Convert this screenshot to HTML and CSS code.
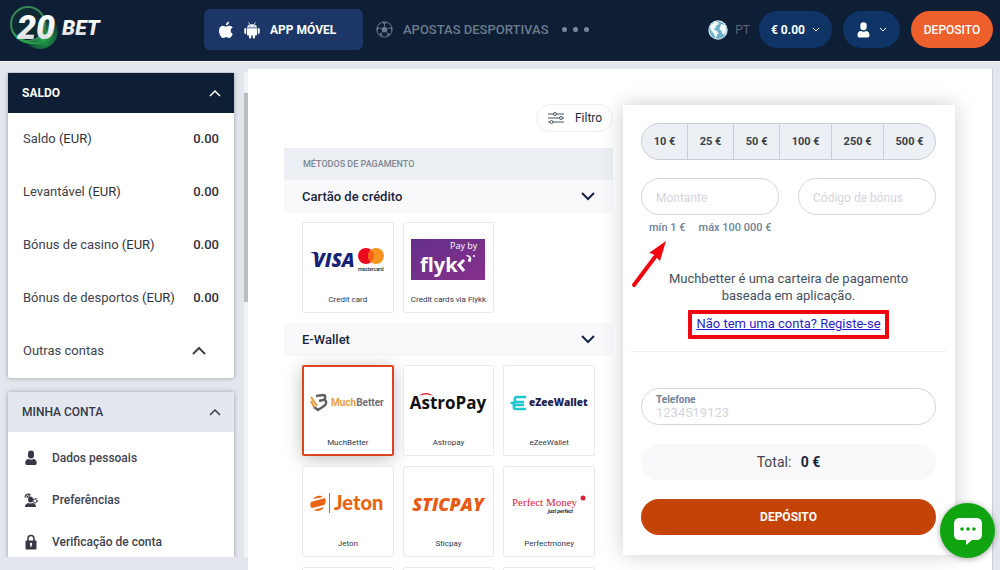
FILE: index.html
```html
<!DOCTYPE html>
<html lang="pt">
<head>
    <meta charset="UTF-8">
    <meta name="viewport" content="width=device-width, initial-scale=1.0">
    <title>20Bet - Depósito</title>
    <link rel="stylesheet" href="styles.css">
</head>
<body>
    <header class="header">
        <a class="logo" href="#" aria-label="20Bet">
            <svg width="94" height="48" viewBox="0 0 94 48">
                <defs>
                    <radialGradient id="glow" cx="0.6" cy="0.7" r="0.6">
                        <stop offset="0" stop-color="#22b24a"/>
                        <stop offset="1" stop-color="#0d1e35"/>
                    </radialGradient>
                    <linearGradient id="silver" x1="0" y1="0" x2="0" y2="1">
                        <stop offset="0.3" stop-color="#fff"/>
                        <stop offset="1" stop-color="#cfd3d6"/>
                    </linearGradient>
                </defs>
                <circle cx="32" cy="26" r="18" fill="url(#glow)"/>
                <circle cx="20" cy="19" r="17" fill="#0d2a33" stroke="#3a8553" stroke-width="2"/>
                <path d="M3 25c4 12 20 18 33 12-8 1-22 1-33-12z" fill="#27a04c"/>
                <text class="logo-num" x="9" y="34" fill="url(#silver)">20</text>
                <text class="logo-bet" x="54" y="30" fill="url(#silver)">BET</text>
            </svg>
        </a>
        <nav class="nav">
            <button class="app-button" type="button">
                <svg width="16" height="18" viewBox="0 0 16 18" fill="#fff">
                    <path d="M11 4.8c-1.300 0-2 .8-2.900.8S6.200 4.800 5 4.800C3 4.800 1 6.600 1 9.700 1 13.300 3.400 17 5.300 17c1 0 1.600-.7 2.900-.7 1.200 0 1.700.7 2.800.7 1.800 0 3.300-2.900 3.700-4.100-2.600-1.200-2.700-5 .100-6.300-.9-1.200-2.300-1.800-3.800-1.800z"/>
                    <path d="M7.900 4.500C7.800 2.500 9.300.8 11 .6c.2 2-1.300 3.900-3.100 3.900z"/>
                </svg>
                <svg width="16" height="18" viewBox="0 0 16 18" fill="#fff">
                    <path d="M3 6.500C3 2 13 2 13 6.500zM3 7.300h10v6.200c0 .6-.4 1-1 1H4c-.6 0-1-.4-1-1z"/>
                    <rect x="0.300" y="7" width="2" height="6" rx="1"/>
                    <rect x="13.700" y="7" width="2" height="6" rx="1"/>
                    <rect x="5" y="12" width="2.200" height="5.500" rx="1"/>
                    <rect x="8.800" y="12" width="2.200" height="5.500" rx="1"/>
                    <path d="M4.500 1.200l1.600 2.600M11.500 1.200L9.900 3.800" stroke="#fff" stroke-width="0.700"/>
                    <circle cx="6" cy="5" r="0.600" fill="#1c3668"/>
                    <circle cx="10" cy="5" r="0.600" fill="#1c3668"/>
                </svg>
                <span>APP MÓVEL</span>
            </button>
            <a class="sports" href="#">
                <svg width="17" height="17" viewBox="0 0 17 17">
                    <circle cx="8.500" cy="8.500" r="7.700" fill="none" stroke="#6d7b8b"/>
                    <path d="M8.500 5.300l3.200 2.300-1.200 3.700h-4L5.300 7.600zM5.500 1.500h6l-3 2zM1 6l2.300.7L1 10zM16 6l-2.300.7L16 10zM3.500 14l.6-2.600 3 3.500zM13.500 14l-.6-2.600-3 3.500z" fill="#6d7b8b"/>
                    <path d="M8.500 5.300V3M11.700 7.600l2.300-.9M10.500 11.300l1.900 1.800M6.500 11.300l-1.900 1.800M5.300 7.600L3 6.700" stroke="#6d7b8b" stroke-width="0.800"/>
                </svg>
                <span>APOSTAS DESPORTIVAS</span>
            </a>
            <button class="more" type="button" aria-label="Mais"><i></i><i></i><i></i></button>
        </nav>
        <div class="user-bar">
            <button class="lang" type="button">
                <svg width="20" height="20" viewBox="0 0 20 20">
                    <circle cx="10" cy="10" r="9.700" fill="#e6f1f5"/>
                    <circle cx="10" cy="10" r="8.700" fill="#6fb0cb"/>
                    <path d="M3 5l4-3 4 .5-1 2.500-2 .5v2L5.500 9l2.800 1.500 2 2L9 15.500 7.500 18 6 14l-2.500-3L2 8zM13 4l4 1 1.500 4-1 4-2.500 2-1.500-4-2-2 1-3z" fill="#f1f8f8"/>
                </svg>
                <span>PT</span>
            </button>
            <button class="pill balance" type="button">
                <span>€ 0.00</span>
                <svg class="chevron" width="8" height="6" viewBox="0 0 8 6"><path d="M1 1l3 3 3-3"/></svg>
            </button>
            <button class="pill profile" type="button" aria-label="Perfil">
                <svg width="13" height="16" viewBox="0 0 13 16" fill="#fff">
                    <rect x="3.300" y="0.300" width="6.400" height="8" rx="3.200"/>
                    <path d="M.5 13.500C.5 10 2.500 9 4 9c1.500 1 3.500 1 5 0 1.500 0 3.500 1 3.500 4.500 0 1.300-.7 2-2 2h-8c-1.300 0-2-.7-2-2z"/>
                </svg>
                <svg class="chevron" width="8" height="6" viewBox="0 0 8 6"><path d="M1 1l3 3 3-3"/></svg>
            </button>
            <button class="pill top-deposit" type="button">DEPOSITO</button>
        </div>
    </header>

    <div class="page">
        <aside class="sidebar">
            <div class="sidebar-panels">
                <section class="panel">
                    <button class="panel-title dark" type="button">SALDO
                        <svg class="chevron" width="12" height="8" viewBox="0 0 12 8"><path d="M1 7l5-5 5 5"/></svg>
                    </button>
                    <dl class="balances">
                        <div><dt>Saldo <b>(EUR)</b></dt><dd>0.00</dd></div>
                        <div><dt>Levantável <b>(EUR)</b></dt><dd>0.00</dd></div>
                        <div><dt>Bónus de casino <b>(EUR)</b></dt><dd>0.00</dd></div>
                        <div><dt>Bónus de desportos <b>(EUR)</b></dt><dd>0.00</dd></div>
                    </dl>
                    <button class="other-accounts" type="button">Outras contas
                        <svg class="chevron" width="14" height="9" viewBox="0 0 14 9"><path d="M1 8l6-6 6 6"/></svg>
                    </button>
                </section>
                <section class="panel">
                    <button class="panel-title" type="button">MINHA CONTA
                        <svg class="chevron" width="12" height="8" viewBox="0 0 12 8"><path d="M1 7l5-5 5 5"/></svg>
                    </button>
                    <ul class="menu">
                        <li><a href="#">
                            <svg width="14" height="16" viewBox="0 0 14 16">
                                <rect x="4" y="0.500" width="6" height="8" rx="3"/>
                                <path d="M1.300 13C1.300 10 3 9 4.500 9c1.500 1 3.500 1 5 0 1.500 0 3.200 1 3.200 4 0 1.500-.7 2-2 2H3.300c-1.300 0-2-.5-2-2z"/>
                            </svg>Dados pessoais</a></li>
                        <li><a href="#">
                            <svg width="14" height="16" viewBox="0 0 14 16">
                                <ellipse cx="6.500" cy="7.500" rx="2.500" ry="3"/>
                                <path d="M1 15c0-3 2-4 4-4 1 .7 2 .7 3 0 2 0 4 1 4 4z"/>
                                <path d="M1 5.500C1 2 5 1.500 6.500 3M2.800 6c.2-2 2-2.500 3-1.800" fill="none" stroke="#373844" stroke-width="1.200"/>
                                <circle cx="11" cy="8.800" r="2" fill="none" stroke="#373844" stroke-width="1.500" stroke-dasharray="1.500 0.600"/>
                            </svg>Preferências</a></li>
                        <li><a href="#">
                            <svg width="14" height="16" viewBox="0 0 14 16">
                                <path d="M4 7V4.500a3 3 0 0 1 6 0V7" fill="none" stroke="#373844" stroke-width="1.600"/>
                                <rect x="1.500" y="6.500" width="11" height="9" rx="1"/>
                                <circle cx="7" cy="10" r="1.200" fill="#fff"/>
                                <path d="M6.400 10h1.200v3H6.400z" fill="#fff"/>
                            </svg>Verificação de conta</a></li>
                    </ul>
                </section>
            </div>
            <div class="scroll-track"><div class="scroll-thumb"></div></div>
        </aside>

        <main class="content">
            <section class="methods">
                <button class="filter" type="button">
                    <svg width="18" height="14" viewBox="0 0 18 14" fill="#fff" stroke="#475260" stroke-width="1">
                        <path d="M1 3h16M1 7h16M1 11h16"/>
                        <circle cx="8" cy="3" r="1.500"/><circle cx="14" cy="7" r="1.500"/><circle cx="4.500" cy="11" r="1.500"/>
                    </svg>
                    Filtro
                </button>
                <h2 class="methods-title">MÉTODOS DE PAGAMENTO</h2>

                <button class="group-title" type="button">Cartão de crédito
                    <svg class="chevron" width="14" height="9" viewBox="0 0 14 9"><path d="M1 1l6 6 6-6"/></svg>
                </button>
                <div class="cards">
                    <button class="card" type="button">
                        <svg class="brand" viewBox="0 0 78 44">
                            <text class="visa" x="4" y="29">VISA</text>
                            <path d="M1 14h7l2 7c-2-3-5-6-9-7z" fill="#172274"/>
                            <circle cx="57" cy="18" r="8" fill="#eb0a20"/>
                            <circle cx="67" cy="18" r="8" fill="#f79420"/>
                            <path d="M62 11.800a8 8 0 0 1 0 12.400 8 8 0 0 1 0-12.400z" fill="#f5601c"/>
                            <text class="mastercard" x="49" y="33">mastercard</text>
                        </svg>
                        <span>Credit card</span>
                    </button>
                    <button class="card" type="button">
                        <svg class="brand" viewBox="0 0 78 44">
                            <defs>
                                <linearGradient id="violet" x1="0" y1="0" x2="1" y2="1">
                                    <stop offset="0" stop-color="#63308a"/>
                                    <stop offset="1" stop-color="#87308b"/>
                                </linearGradient>
                            </defs>
                            <rect x="2" y="1" width="74" height="41" fill="url(#violet)"/>
                            <text class="pay-by" x="41" y="11">Pay by</text>
                            <text class="flykk" x="11" y="34">flyk</text>
                            <path d="M55 22l-5 5 5 6" fill="none" stroke="#fff" stroke-width="3"/>
                            <path d="M57 17c4 0 6 2 5 6-1 2-3 1-3-1 0-1 1-2 2-2-1-1-3-1-4-3z" fill="#fff"/>
                            <circle cx="65" cy="18" r="1" fill="#fff"/>
                        </svg>
                        <span>Credit cards via Flykk</span>
                    </button>
                </div>

                <button class="group-title" type="button">E-Wallet
                    <svg class="chevron" width="14" height="9" viewBox="0 0 14 9"><path d="M1 1l6 6 6-6"/></svg>
                </button>
                <div class="cards">
                    <button class="card selected" type="button">
                        <svg class="brand" viewBox="0 0 78 44">
                            <path d="M7 15l7-1c3 0 3 4 0 5l-4 1 4-1c4-1 4 4 1 6l-6 4-4-3" fill="none" stroke="#626266" stroke-width="2.400"/>
                            <path d="M2 16l6 9M2 20l3 6" fill="none" stroke="#e79a3b" stroke-width="2"/>
                            <text class="much" x="22" y="25"><tspan fill="#e9a03c">Much</tspan><tspan fill="#6f6f73">Better</tspan></text>
                        </svg>
                        <span>MuchBetter</span>
                    </button>
                    <button class="card" type="button">
                        <svg class="brand" viewBox="0 0 78 44">
                            <text class="astro" x="39" y="28">AstroPay</text>
                            <path d="M10 15c3-4 11-4 14 0-4-2-10-2-14 0z" fill="#d9202c"/>
                        </svg>
                        <span>Astropay</span>
                    </button>
                    <button class="card" type="button">
                        <svg class="brand" viewBox="0 0 78 44">
                            <path d="M16 16H7c-3 0-3 5 0 5h7M16 28H6c-3 0-3-4 0-4h8M6 21l-4 1 4 3" fill="none" stroke="#20c5cd" stroke-width="2.500"/>
                            <text class="ezee" x="19" y="25">eZeeWallet</text>
                        </svg>
                        <span>eZeeWallet</span>
                    </button>
                    <button class="card" type="button">
                        <svg class="brand" viewBox="0 0 78 44">
                            <path d="M2 20l14-4c1 2 1 6-1 7L3 26c-2-1-2-4-1-6zM4 17c3-4 8-4 10-2zM5 28l10-3c-2 4-7 5-10 3z" fill="#ea6411"/>
                            <path d="M20.500 11v20" stroke="#7c7c80"/>
                            <text class="jeton" x="25" y="28">Jeton</text>
                        </svg>
                        <span>Jeton</span>
                    </button>
                    <button class="card" type="button">
                        <svg class="brand" viewBox="0 0 78 44">
                            <text class="sticpay" x="39" y="29">STICPAY</text>
                        </svg>
                        <span>Sticpay</span>
                    </button>
                    <button class="card" type="button">
                        <svg class="brand" viewBox="0 0 78 44">
                            <text class="perfect" x="2" y="24">Perfect Money</text>
                            <circle cx="73" cy="16" r="2.500" fill="#d92237"/>
                            <text class="just" x="38" y="31">just perfect</text>
                        </svg>
                        <span>Perfectmoney</span>
                    </button>
                    <button class="card" type="button" aria-label="Mais métodos"></button>
                    <button class="card" type="button" aria-label="Mais métodos"></button>
                    <button class="card" type="button" aria-label="Mais métodos"></button>
                </div>
            </section>

            <form class="deposit">
                <div class="amounts">
                    <button type="button">10 €</button>
                    <button type="button">25 €</button>
                    <button type="button">50 €</button>
                    <button class="wide" type="button">100 €</button>
                    <button class="wide" type="button">250 €</button>
                    <button class="wide" type="button">500 €</button>
                </div>
                <div class="fields">
                    <input type="text" aria-label="Montante" placeholder="Montante">
                    <input type="text" aria-label="Código de bónus" placeholder="Código de bónus">
                </div>
                <div class="limits">
                    <span>mín 1 €</span>
                    <span>máx 100 000 €</span>
                    <svg class="arrow" width="38" height="50" viewBox="0 0 38 50">
                        <path d="M3 46l21-28" stroke="#f00610" stroke-width="4" stroke-linecap="round"/>
                        <path d="M35 2l-6 20-4-4-3-3-4-1z" fill="#f00610"/>
                    </svg>
                </div>
                <p class="description">Muchbetter é uma carteira de pagamento baseada em aplicação.</p>
                <a class="register" href="#">Não tem uma conta? Registe-se</a>
                <hr>
                <div class="phone">
                    <label for="phone">Telefone</label>
                    <input type="tel" id="phone" placeholder="1234519123">
                </div>
                <div class="total">Total: <b>0 €</b></div>
                <button class="submit" type="submit">DEPÓSITO</button>
            </form>
        </main>
    </div>

    <!-- Chat button -->
    <button class="chat" type="button" aria-label="Chat">
        <svg width="28" height="28" viewBox="0 0 28 28">
            <path d="M6 1h16c4 0 6 2 6 6v10c0 4-2 6-6 6h-4l-6 5v-5H6c-4 0-6-2-6-6V7c0-4 2-6 6-6z" fill="#fff"/>
            <circle cx="8" cy="12" r="1.800" fill="#10a510"/>
            <circle cx="14" cy="12" r="1.800" fill="#10a510"/>
            <circle cx="20" cy="12" r="1.800" fill="#10a510"/>
        </svg>
    </button>
</body>
</html>
```
FILE: styles.css
```css
* {
    box-sizing: border-box;
}

body {
    margin: 0;
    height: 100vh;
    display: flex;
    flex-direction: column;
    overflow: hidden;
    background-color: #e3e6ec;
    color: #41434d;
    font-family: Roboto, "Liberation Sans", sans-serif;
    font-size: 13px;
}

button {
    border: none;
    background: none;
    padding: 0;
    color: inherit;
    font-family: inherit;
    cursor: pointer;
}

a {
    color: inherit;
    text-decoration: none;
}

svg {
    flex-shrink: 0;
}

.chevron {
    fill: none;
    stroke: currentColor;
    stroke-width: 2;
}

/* Header */
.header {
    height: 62px;
    flex-shrink: 0;
    display: flex;
    align-items: flex-start;
    padding: 0 7px 0 8px;
    background-color: #0d1e35;
    border-bottom: 1px solid #f6f7fa;
}

.logo {
    width: 196px;
    padding-top: 5px;
}

.logo svg {
    display: block;
}

.logo-num {
    font: italic 900 34px Roboto, sans-serif;
}

.logo-bet {
    font: italic 900 21px Roboto, sans-serif;
}

.nav {
    display: flex;
    align-items: center;
    padding-top: 9px;
}

.app-button {
    width: 159px;
    height: 41px;
    display: flex;
    align-items: center;
    gap: 10px;
    padding-left: 14px;
    border-radius: 6px;
    background-color: #1c3668;
    color: #fff;
    font-size: 12px;
    font-weight: 700;
}

.sports {
    display: flex;
    align-items: center;
    gap: 10px;
    margin-left: 13px;
    color: #6d7b8b;
    font-size: 13px;
    font-weight: 500;
}

.more {
    display: flex;
    gap: 6px;
    margin-left: 13px;
}

.more i {
    width: 5px;
    height: 5px;
    border-radius: 50%;
    background-color: #7d8897;
}

.user-bar {
    display: flex;
    align-items: center;
    margin-left: auto;
    padding-top: 11px;
}

.lang {
    display: flex;
    align-items: center;
    gap: 7px;
    margin-right: 9px;
    color: #5a6574;
    font-size: 12px;
}

.pill {
    height: 37px;
    display: flex;
    align-items: center;
    justify-content: center;
    border-radius: 19px;
    background-color: #0f3567;
    color: #fff;
    font-weight: 700;
}

.pill .chevron {
    stroke-width: 1;
}

.balance {
    width: 73px;
    gap: 7px;
    font-size: 12px;
}

.profile {
    width: 57px;
    gap: 9px;
    margin: 0 11px;
}

.top-deposit {
    width: 82px;
    background-color: #ee602b;
    font-size: 12px;
    font-weight: 500;
}

/* Sidebar */
.page {
    flex: 1;
    min-height: 0;
    display: flex;
}

.sidebar {
    width: 248px;
    flex-shrink: 0;
    display: flex;
    justify-content: space-between;
    margin: 10px 0 13px;
    overflow: hidden;
}

.sidebar-panels {
    width: 240px;
    padding: 0 6px 0 8px;
    margin-top: 1px;
}

.panel {
    margin-bottom: 14px;
    background-color: #fff;
    border-radius: 2px;
    box-shadow: 0 0 4px rgba(40, 50, 70, 0.4);
}

.panel-title {
    width: 100%;
    height: 40px;
    display: flex;
    align-items: center;
    justify-content: space-between;
    padding: 0 13px 0 14px;
    background-color: #e4e8ee;
    color: #373844;
    font-size: 12px;
    font-weight: 500;
}

.panel-title.dark {
    background-color: #0d1e35;
    color: #fff;
    font-weight: 700;
}

.panel-title .chevron {
    stroke-width: 1.5;
}

.balances {
    margin: 0;
}

.balances div,
.other-accounts {
    width: 100%;
    height: 53px;
    display: flex;
    align-items: center;
    justify-content: space-between;
    padding: 0 15px 2px;
    font-size: 13px;
}

.other-accounts {
    padding-right: 28px;
}

.balances b,
.balances dd {
    margin: 0;
    color: #2e303c;
    font-weight: 500;
}

.balances b {
    font-weight: 400;
}

.menu {
    margin: 0;
    padding: 5px 0 20px;
    list-style: none;
}

.menu a {
    height: 42px;
    display: flex;
    align-items: center;
    gap: 14px;
    padding-left: 16px;
    font-size: 12px;
    font-weight: 500;
}

.menu svg {
    fill: #373844;
}

.scroll-track {
    width: 4px;
    background-color: #f3f3f5;
}

.scroll-thumb {
    height: 209px;
    margin-top: 21px;
    background-color: #bdbdc1;
}

/* Content */
.content {
    flex: 1;
    display: grid;
    grid-template-columns: 329fr 332fr;
    align-items: start;
    gap: 10px;
    margin: 7px 7px 0 0;
    padding: 36px 37px 0 36px;
    background-color: #fff;
    border-right: 1px solid #c9ced8;
    overflow: hidden;
}

.filter {
    width: 77px;
    height: 28px;
    display: flex;
    align-items: center;
    justify-content: center;
    gap: 10px;
    margin: -1px 0 16px auto;
    border: 1px solid #ededf3;
    border-radius: 14px;
    color: #1c2b45;
    font-size: 12px;
}

.methods-title {
    height: 32px;
    margin: 0;
    padding-left: 19px;
    background-color: #ebeff3;
    color: #808790;
    font-size: 9px;
    font-weight: 500;
    line-height: 32px;
}

.group-title {
    width: 100%;
    height: 33px;
    display: flex;
    align-items: center;
    justify-content: space-between;
    padding: 0 18px;
    background-color: #f9f9fc;
    color: #17253d;
    font-size: 13px;
    font-weight: 500;
}

.cards {
    display: grid;
    grid-template-columns: 1fr 1fr 1fr;
    gap: 10px 9px;
    padding: 9px 18px 10px;
}

.card {
    height: 91px;
    display: flex;
    flex-direction: column;
    align-items: center;
    padding-top: 15px;
    border: 1px solid #ebebee;
    border-radius: 2px;
    background-color: #fff;
    color: #2c3950;
    font-size: 8px;
    line-height: 10px;
    white-space: nowrap;
}

.card.selected {
    border: 2px solid #dc4520;
    padding-top: 14px;
    box-shadow: 0 3px 18px rgba(0, 0, 0, 0.25);
}

.brand {
    width: 78px;
    height: 44px;
    margin-bottom: 13px;
}

.visa {
    font: italic 800 19px "Open Sans", sans-serif;
    fill: #172274;
}

.mastercard {
    font: 500 5px Roboto, sans-serif;
    fill: #222;
}

.pay-by {
    font: 9px "Open Sans", sans-serif;
    fill: #fff;
}

.flykk {
    font: 700 20px "Open Sans", sans-serif;
    fill: #fff;
}

.much {
    font: 700 10px Roboto, sans-serif;
}

.astro {
    font: 700 17px "Open Sans", sans-serif;
    text-anchor: middle;
    fill: #111;
}

.ezee {
    font: 800 10px "Open Sans", sans-serif;
    fill: #1b2054;
}

.jeton {
    font: 900 20px Lato, sans-serif;
    fill: #ea6411;
}

.sticpay {
    font: italic 800 18px "Open Sans", sans-serif;
    text-anchor: middle;
    fill: #e85a14;
}

.perfect {
    font: 11px "Liberation Serif", serif;
    fill: #d92237;
}

.just {
    font: italic 700 5px Roboto, sans-serif;
    fill: #222;
}

/* Deposit form */
.deposit {
    display: flex;
    flex-direction: column;
    padding: 18px 19px 20px 18px;
    background-color: #fff;
    box-shadow: 0 0 20px rgba(0, 0, 0, 0.2);
}

.amounts {
    height: 37px;
    display: flex;
    border: 1px solid #c8ced8;
    border-radius: 19px;
    background-color: #ecf0f4;
    overflow: hidden;
}

.amounts button {
    flex: 46;
    color: #3b4148;
    font-size: 11px;
    font-weight: 700;
}

.amounts .wide {
    flex: 52;
}

.amounts button + button {
    border-left: 1px solid #c8ced8;
}

.fields {
    display: grid;
    grid-template-columns: 1fr 1fr;
    gap: 19px;
    margin-top: 18px;
}

.fields input {
    width: 100%;
    height: 37px;
    padding: 2px 14px 0;
    border: 1px solid #d3d5da;
    border-radius: 19px;
    font-family: inherit;
    font-size: 12px;
}

input::placeholder {
    color: #d2d5de;
}

.limits {
    position: relative;
    display: flex;
    gap: 13px;
    margin-top: 6px;
    padding-left: 8px;
    color: #70819a;
    font-size: 11px;
    font-weight: 500;
    line-height: 14px;
}

/* Arrow lies over the form, pointing at the minimum */
.arrow {
    position: absolute;
    left: -10px;
    top: 18px;
}

.description {
    width: 260px;
    margin: 35px auto 6px;
    color: #44505f;
    font-size: 13px;
    line-height: 17px;
    text-align: center;
}

.register {
    align-self: center;
    padding: 2px 4px 3px;
    border: 4px solid #ee0610;
    border-radius: 1px;
    color: #2a1fc4;
    font-size: 13px;
    line-height: 16px;
    text-decoration: underline;
}

.deposit hr {
    width: auto;
    height: 1px;
    margin: 12px -10px 36px;
    border: none;
    background-color: #eeeef1;
}

.phone {
    height: 37px;
    display: flex;
    flex-direction: column;
    justify-content: center;
    padding: 0 14px;
    border: 1px solid #d3d5da;
    border-radius: 19px;
}

.phone label {
    color: #70819a;
    font-size: 10px;
    font-weight: 700;
    line-height: 12px;
}

.phone input {
    height: 14px;
    padding: 0;
    border: none;
    outline: none;
    font-family: inherit;
    font-size: 13px;
}

.total {
    height: 36px;
    margin: 19px 0;
    border-radius: 18px;
    background-color: #f9f9fc;
    font-size: 14px;
    line-height: 36px;
    text-align: center;
}

.total b {
    margin-left: 6px;
    color: #17253d;
}

.submit {
    height: 36px;
    border-radius: 18px;
    background-color: #c54306;
    color: #fff;
    font-size: 12px;
    font-weight: 700;
}

.chat {
    position: fixed;
    right: 5px;
    bottom: 12px;
    width: 55px;
    height: 55px;
    display: flex;
    align-items: center;
    justify-content: center;
    border-radius: 50%;
    background-color: #10a510;
    box-shadow: 0 1px 6px rgba(0, 0, 0, 0.35);
}
```
